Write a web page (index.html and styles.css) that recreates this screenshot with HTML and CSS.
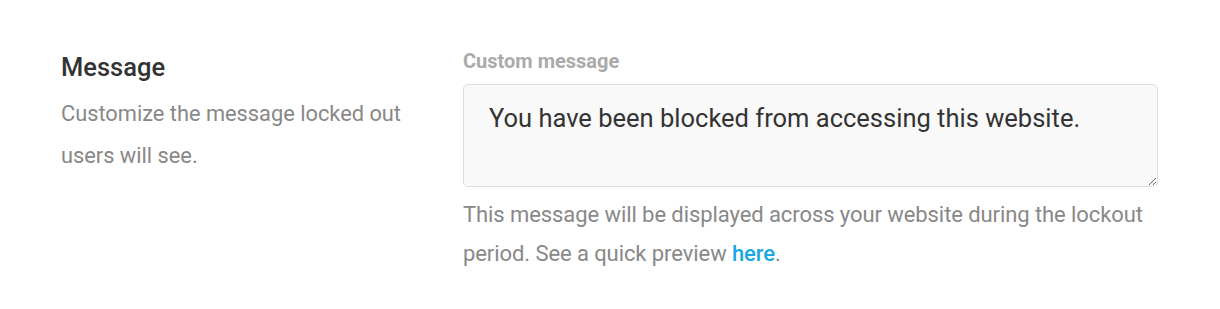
FILE: index.html
```html
<!DOCTYPE html>
<html>
<head>
<meta charset="utf-8">
<link rel="stylesheet" href="styles.css">
</head>
<body>
<div class="row">
  <div class="side">
    <h3 class="title">Message</h3>
    <p class="desc">Customize the message locked out users will see.</p>
  </div>
  <div class="main">
    <label class="label" for="msg">Custom message</label>
    <textarea id="msg" class="input">You have been blocked from accessing this website.</textarea>
    <p class="help">This message will be displayed across your website during the lockout period. See a quick preview <a href="#" class="link">here</a>.</p>
  </div>
</div>
</body>
</html>
```

FILE: styles.css
```css
html, body {
  margin: 0;
  padding: 0;
  background: #fff;
  font-family: Roboto, "Noto Sans", sans-serif;
}
.row {
  display: flex;
  padding: 50px 62px 0 61px;
}
.side {
  width: 402px;
  flex: none;
}
.title {
  margin: 0;
  font-size: 25.5px;
  font-weight: 500;
  color: #333;
  line-height: 34px;
}
.desc {
  margin: 9px 0 0;
  font-size: 21.8px;
  line-height: 42px;
  color: #888;
  width: 350px;
}
.main {
  flex: 1;
  display: flex;
  flex-direction: column;
}
.label {
  font-size: 20px;
  font-weight: 700;
  color: #aaa;
  line-height: 22px;
}
.input {
  margin-top: 12px;
  height: 103px;
  box-sizing: border-box;
  border: 1px solid #ddd;
  border-radius: 5px;
  background: #f9f9f9;
  padding: 17px 25px;
  font-family: Roboto, "Noto Sans", sans-serif;
  font-size: 25.5px;
  line-height: 32px;
  color: #333;
  resize: vertical;
}
.help {
  margin: 9px 0 0;
  font-size: 22px;
  line-height: 38.5px;
  color: #888;
  letter-spacing: -0.08px;
}
.link {
  color: #17a8e3;
  font-weight: 500;
  text-decoration: none;
}
```
